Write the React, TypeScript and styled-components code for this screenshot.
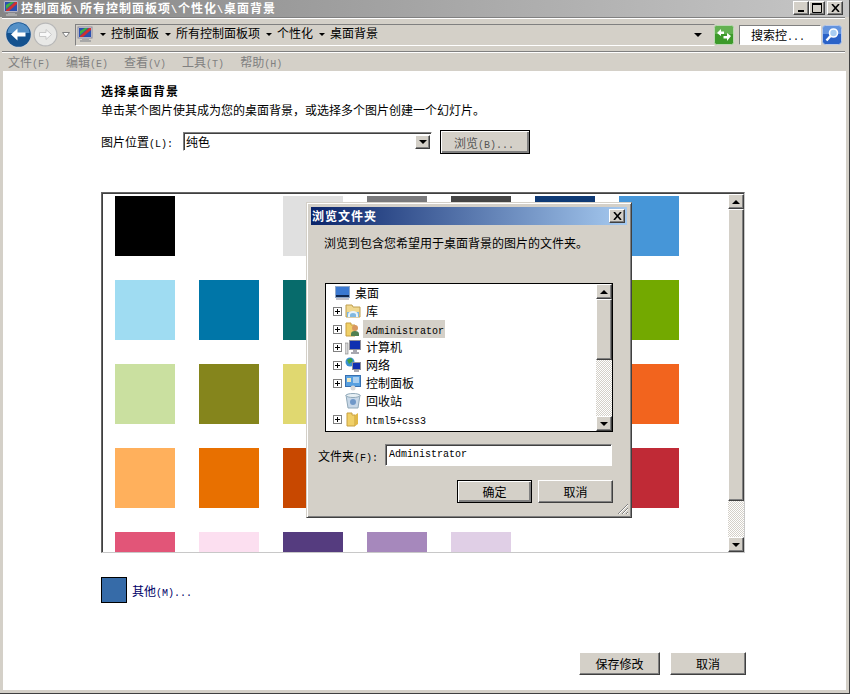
import styled, { createGlobalStyle } from "styled-components";

const GlobalStyle = createGlobalStyle`
  html, body {
    margin: 0;
    padding: 0;
    background: #d4d0c8;
  }
  * {
    box-sizing: border-box;
  }
  body {
    font-family: "Noto Sans CJK SC", "Liberation Sans", sans-serif;
    font-size: 12px;
    color: #000;
  }
`;

const raised = `
  background: #d4d0c8;
  border: 1px solid;
  border-color: #fff #404040 #404040 #fff;
  box-shadow: inset -1px -1px 0 #808080;
`;

const sunken = `
  border: 1px solid;
  border-color: #808080 #fff #fff #808080;
  box-shadow: inset 1px 1px 0 #404040;
`;

const Window = styled.div`
  position: relative;
  width: 850px;
  height: 694px;
  display: flex;
  flex-direction: column;
  overflow: hidden;
  background: #d4d0c8;
  border-right: 1px solid #404040;
  border-bottom: 1px solid #404040;
`;

const TitleBar = styled.div`
  height: 17px;
  flex: none;
  display: flex;
  align-items: center;
  padding: 0 6px 1px 3px;
  background: linear-gradient(90deg, #858585, #c6c6c6);
`;

const TitleText = styled.div`
  margin-left: 1px;
  font-weight: 700;
  letter-spacing: 1px;
  line-height: 16px;
  color: #fff;
  white-space: nowrap;
`;

const CaptionButtons = styled.div`
  margin-left: auto;
  display: flex;
  align-items: center;
`;

const CaptionButton = styled.div<{ $gap?: number }>`
  ${raised}
  width: 16px;
  height: 14px;
  margin-left: ${(p) => p.$gap ?? 0}px;
  display: flex;
  align-items: center;
  justify-content: center;
`;

const NavBar = styled.div`
  height: 35px;
  flex: none;
  display: flex;
  align-items: center;
  margin: 0 4px 0 2px;
  padding: 0 2px 0 3px;
  border-top: 1px solid #808080;
  border-bottom: 1px solid #808080;
  box-shadow: inset 0 1px 0 #fff, 0 1px 0 #fff;
`;

const NavGroup = styled.div`
  width: 70px;
  flex: none;
  display: flex;
  align-items: center;
`;

const ForwardSvg = styled.svg`
  margin-left: 1px;
`;

const DropSvg = styled.svg`
  margin-left: 4px;
`;

const RefreshSvg = styled.svg`
  margin-left: -1px;
`;

const SearchSvg = styled.svg`
  margin-left: 1px;
`;

const AddressBar = styled.div`
  width: 640px;
  height: 22px;
  flex: none;
  display: flex;
  align-items: center;
  padding: 0 12px 0 1px;
  border: 1px solid;
  border-color: #808080 #d4d0c8 #fff #808080;
`;

const CrumbList = styled.div`
  margin-left: 6px;
  display: flex;
  align-items: center;
  gap: 6px;
`;

const Crumb = styled.span`
  display: flex;
  align-items: center;
  gap: 5px;
  padding-bottom: 3px;
  line-height: 16px;
  white-space: nowrap;
`;

const CrumbArrow = styled.span`
  width: 0;
  height: 0;
  flex: none;
  margin-top: 3px;
  border-left: 3px solid transparent;
  border-right: 3px solid transparent;
  border-top: 3px solid #000;
`;

const AddressDrop = styled.span`
  margin-left: auto;
  width: 0;
  height: 0;
  border-left: 4px solid transparent;
  border-right: 4px solid transparent;
  border-top: 4px solid #000;
`;

const SearchInput = styled.div`
  ${sunken}
  width: 82px;
  height: 20px;
  margin-left: 5px;
  padding-left: 11px;
  background: #fff;
  line-height: 18px;
  white-space: nowrap;
  box-shadow: none;
`;

const MenuBar = styled.div`
  height: 19px;
  flex: none;
  display: flex;
  align-items: center;
  gap: 16px;
  padding: 1px 0 0 8px;
  color: #808080;
`;

const MenuItem = styled.span`
  white-space: nowrap;
  line-height: 16px;
`;

const Mono = styled.span`
  font-family: "Liberation Mono", monospace;
  font-size: 10px;
  line-height: 1;
`;

const Content = styled.main`
  flex: 1;
  min-height: 0;
  margin: 0 3px 3px 3px;
  padding: 11px 100px 15px 98px;
  display: flex;
  flex-direction: column;
  background: #fff;
`;

const Heading = styled.div`
  font-weight: 700;
  letter-spacing: 1px;
  line-height: 18px;
`;

const Intro = styled.div`
  line-height: 20px;
`;

const LocationRow = styled.div`
  margin-top: 9px;
  height: 25px;
  display: flex;
  align-items: center;
`;

const LocationLabel = styled.span`
  width: 82px;
  flex: none;
  white-space: nowrap;
`;

const SelectBox = styled.div`
  ${sunken}
  width: 249px;
  height: 19px;
  flex: none;
  display: flex;
  align-items: center;
  justify-content: space-between;
  padding: 0 1px 0 2px;
  background: #fff;
`;

const Button = styled.div<{ $primary?: boolean; $width: number; $height: number }>`
  ${raised}
  width: ${(p) => p.$width}px;
  height: ${(p) => p.$height}px;
  flex: none;
  display: flex;
  align-items: center;
  justify-content: center;
  white-space: nowrap;
  ${(p) =>
    p.$primary &&
    `outline: 1px solid #000; outline-offset: -1px;
     box-shadow: inset 1px 1px 0 #fff, inset -2px -2px 0 #808080;`}
`;

const BrowseButton = styled(Button)`
  margin-left: 8px;
  padding-right: 2px;
  align-self: flex-end;
  color: #555;
`;

const ScrollButton = styled.div<{ $size: number }>`
  ${raised}
  width: ${(p) => p.$size}px;
  height: ${(p) => p.$size - 1}px;
  flex: none;
  display: flex;
  align-items: center;
  justify-content: center;
`;

const ArrowGlyph = styled.span<{ $up?: boolean }>`
  width: 0;
  height: 0;
  border-left: 4px solid transparent;
  border-right: 4px solid transparent;
  ${(p) => (p.$up ? "border-bottom: 4px solid #000;" : "border-top: 4px solid #000;")}
`;

const Track = styled.div`
  flex: 1;
  background: repeating-conic-gradient(#d4d0c8 0 25%, #fff 0 50%) 0 0 / 2px 2px;
`;

const Thumb = styled.div<{ $height: number }>`
  ${raised}
  height: ${(p) => p.$height}px;
  flex: none;
`;

const ScrollBar = styled.div<{ $width: number }>`
  width: ${(p) => p.$width}px;
  flex: none;
  display: flex;
  flex-direction: column;
`;

const ColorBox = styled.div`
  margin-top: 38px;
  padding-top: 1px;
  width: 644px;
  height: 361px;
  flex: none;
  display: flex;
  overflow: hidden;
  border: 1px solid;
  border-color: #666 #c8c8c8 #c8c8c8 #666;
  box-shadow: inset 1px 1px 0 #404040;
`;

const SwatchGrid = styled.div`
  flex: 1;
  padding: 2px 0 0 13px;
  display: grid;
  grid-template-columns: repeat(7, 60px);
  grid-auto-rows: 60px;
  gap: 24px;
  overflow: hidden;
`;

const Swatch = styled.div<{ $color: string }>`
  background: ${(p) => p.$color};
`;

const OtherRow = styled.div`
  margin-top: 24px;
  display: flex;
  align-items: center;
  gap: 5px;
  color: #000066;
`;

const OtherSwatch = styled.div`
  width: 26px;
  height: 26px;
  background: #366ba8;
  border: 1px solid #000;
`;

const Footer = styled.div`
  margin-top: auto;
  display: flex;
  justify-content: flex-end;
  gap: 10px;
`;

const Dialog = styled.div`
  position: absolute;
  left: 306px;
  top: 202px;
  width: 326px;
  height: 316px;
  padding: 4px;
  display: flex;
  flex-direction: column;
  background: #d4d0c8;
  border: 1px solid;
  border-color: #d4d0c8 #404040 #404040 #d4d0c8;
  box-shadow: inset 1px 1px 0 #fff, inset -1px -1px 0 #808080;
`;

const DialogTitle = styled.div`
  height: 18px;
  flex: none;
  display: flex;
  align-items: center;
  justify-content: space-between;
  padding: 0 2px 1px 1px;
  background: linear-gradient(90deg, #0a246a, #a6caf0);
  color: #fff;
  font-weight: 700;
  letter-spacing: 1px;
`;

const DialogMessage = styled.div`
  margin: 9px 0 0 13px;
  line-height: 18px;
  white-space: nowrap;
`;

const Tree = styled.div`
  margin: 31px 0 0 14px;
  width: 288px;
  height: 149px;
  flex: none;
  display: flex;
  background: #fff;
  border: 1px solid #000;
  box-shadow: inset -1px -1px 0 #fff;
`;

const TreeList = styled.div`
  flex: 1;
  overflow: hidden;
`;

const TreeRow = styled.div<{ $root?: boolean }>`
  height: 18px;
  display: flex;
  align-items: center;
  padding-left: ${(p) => (p.$root ? 9 : 7)}px;
`;

const Expander = styled.span<{ $hidden?: boolean }>`
  width: 9px;
  height: 9px;
  flex: none;
  margin-right: 3px;
  border: 1px solid ${(p) => (p.$hidden ? "transparent" : "#808080")};
  ${(p) =>
    !p.$hidden &&
    `background:
      linear-gradient(#000, #000) center / 5px 1px no-repeat,
      linear-gradient(#000, #000) center / 1px 5px no-repeat;`}
`;

const TreeLabel = styled.span<{ $selected?: boolean }>`
  height: 18px;
  margin-left: 2px;
  padding: 0 1px 0 3px;
  line-height: 18px;
  white-space: nowrap;
  background: ${(p) => (p.$selected ? "#d4d0c8" : "transparent")};
`;

const FolderRow = styled.div`
  margin: 12px 0 0 7px;
  display: flex;
  align-items: center;
`;

const FolderLabel = styled.span`
  width: 67px;
  flex: none;
  white-space: nowrap;
`;

const FolderInput = styled.div`
  ${sunken}
  width: 227px;
  height: 22px;
  padding: 0 0 1px 3px;
  display: flex;
  align-items: center;
  background: #fff;
`;

const DialogButtons = styled.div`
  margin: 14px 14px 0 0;
  display: flex;
  justify-content: flex-end;
  gap: 6px;
`;

const Grip = styled.svg`
  position: absolute;
  right: 2px;
  bottom: 2px;
`;

const swatches = [
  "#000000", "#ffffff", "#e0e0e0", "#7a7a7c", "#454545", "#0f3a75", "#4696d8",
  "#9fdcf2", "#0076a8", "#076b6b", "#2a8a5a", "#3b9a3a", "#54a020", "#73a900",
  "#cae0a0", "#85851c", "#e0d870", "#f0c820", "#f8a800", "#f08020", "#f2641e",
  "#ffb05c", "#e87000", "#c84800", "#c83020", "#b02020", "#902028", "#c02a36",
  "#e25578", "#fcdff0", "#553c7f", "#a688bc", "#e0cfe6",
];

const MonitorIcon = () => (
  <svg width="17" height="17" viewBox="0 0 17 17">
    <rect x="1" y="1" width="14" height="11" fill="#d8d8e8" stroke="#8a8a9a" />
    <rect x="2" y="2" width="12" height="9" fill="#2a50b0" />
    <path d="M3 10 L12 2 L14 2 L14 4 L6 11 L3 11Z" fill="#d03030" />
    <path d="M3 5 L8 2 L11 2 L3 9Z" fill="#40b040" />
    <path d="M5 13h7v1h2v2H3v-2h2z" fill="#a8a8a8" />
  </svg>
);

const BackIcon = () => (
  <svg width="27" height="27" viewBox="0 0 27 27">
    <circle cx="13.5" cy="13.5" r="13.5" fill="#cfd0d4" />
    <circle cx="13.5" cy="13.5" r="12.3" fill="#14528f" />
    <path d="M2.5 12a11 10 0 0 1 22 0Z" fill="#6aa5da" opacity="0.75" />
    <path d="M6 13.5 L12.5 7.5 V11.5 H20.5 V15.5 H12.5 V19.5Z" fill="#fff" />
  </svg>
);

const ForwardIcon = () => (
  <ForwardSvg width="25" height="25" viewBox="0 0 25 25">
    <circle cx="12.5" cy="12.5" r="12" fill="#b8b8b8" />
    <circle cx="12.5" cy="12.5" r="10.8" fill="#e8e8e6" />
    <path d="M18.5 12.5 L13 7.5 V10.5 H6.5 V14.5 H13 V17.5Z" fill="#f8f8f8" stroke="#c8c8c8" />
  </ForwardSvg>
);

const NavDrop = () => (
  <DropSvg width="8" height="6" viewBox="0 0 8 6">
    <path d="M0.5 0.5 L4 5 L7.5 0.5Z" fill="#fff" stroke="#808080" />
  </DropSvg>
);

const RefreshIcon = () => (
  <RefreshSvg width="20" height="20" viewBox="0 0 20 20">
    <rect x="0.5" y="0.5" width="19" height="19" rx="2" fill="#3d9a2a" stroke="#b8d8b0" />
    <rect x="1" y="1" width="18" height="8" fill="#8ac878" opacity="0.5" />
    <path d="M3 8 L7 4 V6.5 H10 V9 H7 V11Z" fill="#fff" />
    <path d="M17 11 L13 16 V13.5 H9.5 V11 H13 V8Z" fill="#fff" />
  </RefreshSvg>
);

const SearchIcon = () => (
  <SearchSvg width="20" height="20" viewBox="0 0 20 20">
    <rect x="0.5" y="0.5" width="19" height="19" rx="3" fill="#2a62c8" stroke="#b8c8e8" />
    <rect x="1" y="1" width="18" height="8" fill="#8ab4ec" opacity="0.6" />
    <circle cx="11.5" cy="8" r="4" fill="#a8cdf2" stroke="#fff" strokeWidth="1.6" />
    <path d="M8.5 11 L4.5 15.5" stroke="#fff" strokeWidth="2.4" />
  </SearchSvg>
);

const MinimizeGlyph = () => (
  <svg width="8" height="8" viewBox="0 0 8 8">
    <rect x="1" y="6" width="6" height="2" fill="#000" />
  </svg>
);

const MaximizeGlyph = () => (
  <svg width="10" height="10" viewBox="0 0 10 10">
    <path d="M0.5 1.5H9.5V9.5H0.5Z" fill="none" stroke="#000" />
    <rect y="0" width="10" height="2" fill="#000" />
  </svg>
);

const CloseGlyph = () => (
  <svg width="9" height="8" viewBox="0 0 9 8">
    <path d="M1 0 L8 8 M8 0 L1 8" stroke="#000" strokeWidth="1.6" />
  </svg>
);

const DesktopIcon = () => (
  <svg width="15" height="14" viewBox="0 0 15 14">
    <rect x="0.5" y="0.5" width="14" height="11" fill="#3a78d0" stroke="#90a8c8" />
    <rect x="1" y="9" width="13" height="2" fill="#102850" />
    <rect x="1" y="12" width="13" height="2" fill="#c0c0c8" />
  </svg>
);

const LibraryIcon = () => (
  <svg width="16" height="16" viewBox="0 0 16 16">
    <path d="M1 4V2h6l1 2h7v10H1Z" fill="#f0d890" stroke="#c0a050" />
    <rect x="2" y="9" width="12" height="5" fill="#80b8e0" />
    <path d="M4 14v-2a4 3 0 0 1 8 0v2" fill="none" stroke="#e8f4fc" strokeWidth="2" />
  </svg>
);

const UserIcon = () => (
  <svg width="16" height="16" viewBox="0 0 16 16">
    <path d="M1 15V2h5v2h4v11Z" fill="#f0d068" stroke="#c8a040" />
    <circle cx="10" cy="7" r="3" fill="#d89860" />
    <path d="M6 15v-2a4 3 0 0 1 8 0v2Z" fill="#508050" />
  </svg>
);

const ComputerIcon = () => (
  <svg width="16" height="16" viewBox="0 0 16 16">
    <rect x="0" y="4" width="3" height="11" fill="#d8d8d8" stroke="#808080" strokeWidth="0.6" />
    <rect x="4.5" y="1.5" width="11" height="9" fill="#1030b0" stroke="#909098" />
    <path d="M8 11h4v2h2v2H6v-2h2Z" fill="#a8a8b0" />
  </svg>
);

const NetworkIcon = () => (
  <svg width="16" height="16" viewBox="0 0 16 16">
    <circle cx="5" cy="5" r="4.5" fill="#3890d0" />
    <path d="M2 3 L6 1 L8 4 L4 7Z" fill="#40a040" />
    <rect x="7.5" y="5.5" width="8" height="7" fill="#1030b0" stroke="#909098" />
    <path d="M9 13h5v2H9Z" fill="#a8a8b0" />
  </svg>
);

const PanelIcon = () => (
  <svg width="16" height="16" viewBox="0 0 16 16">
    <rect x="0.5" y="0.5" width="15" height="11" fill="#58a0e0" stroke="#3870b0" />
    <rect x="2" y="3" width="4" height="4" fill="#f0e8c0" />
    <path d="M8 3h6M8 5h6M8 7h6" stroke="#fff" />
    <circle cx="8" cy="13" r="2.5" fill="#d8d8d8" />
  </svg>
);

const BinIcon = () => (
  <svg width="16" height="16" viewBox="0 0 16 16">
    <path d="M1 2h14l-2 13H3Z" fill="#c8d8e8" stroke="#90a8b8" />
    <ellipse cx="8" cy="2.5" rx="7" ry="2" fill="#e8f0f4" stroke="#90a8b8" />
    <circle cx="8" cy="9" r="3" fill="#7098c8" />
  </svg>
);

const FolderIcon = () => (
  <svg width="16" height="16" viewBox="0 0 16 16">
    <path d="M2 15V2h5v2h3v11Z" fill="#f0d068" stroke="#c8a040" />
    <path d="M10 4l3-2v11l-3 2Z" fill="#e0b848" />
  </svg>
);

const ScrollArrows = ({ size, thumb }: { size: number; thumb: number }) => (
  <ScrollBar $width={size}>
    <ScrollButton $size={size}>
      <ArrowGlyph $up />
    </ScrollButton>
    <Thumb $height={thumb} />
    <Track />
    <ScrollButton $size={size}>
      <ArrowGlyph />
    </ScrollButton>
  </ScrollBar>
);

const treeRows = [
  { icon: <LibraryIcon />, label: "库" },
  { icon: <UserIcon />, label: <Mono>Administrator</Mono>, selected: true },
  { icon: <ComputerIcon />, label: "计算机" },
  { icon: <NetworkIcon />, label: "网络" },
  { icon: <PanelIcon />, label: "控制面板" },
  { icon: <BinIcon />, label: "回收站", noExpander: true },
  { icon: <FolderIcon />, label: <Mono>html5+css3</Mono> },
];

const menus = [
  ["文件", "(F)"],
  ["编辑", "(E)"],
  ["查看", "(V)"],
  ["工具", "(T)"],
  ["帮助", "(H)"],
];

const crumbs = ["控制面板", "所有控制面板项", "个性化", "桌面背景"];

const App = () => {
  return (
    <Window>
      <GlobalStyle />
      <TitleBar>
        <MonitorIcon />
        <TitleText>
          控制面板<Mono>\</Mono>所有控制面板项<Mono>\</Mono>个性化<Mono>\</Mono>桌面背景
        </TitleText>
        <CaptionButtons>
          <CaptionButton>
            <MinimizeGlyph />
          </CaptionButton>
          <CaptionButton>
            <MaximizeGlyph />
          </CaptionButton>
          <CaptionButton $gap={2}>
            <CloseGlyph />
          </CaptionButton>
        </CaptionButtons>
      </TitleBar>

      <NavBar>
        <NavGroup>
          <BackIcon />
          <ForwardIcon />
          <NavDrop />
        </NavGroup>
        <AddressBar>
          <MonitorIcon />
          <CrumbList>
            {crumbs.map((crumb) => (
              <Crumb key={crumb}>
                <CrumbArrow />
                {crumb}
              </Crumb>
            ))}
          </CrumbList>
          <AddressDrop />
        </AddressBar>
        <RefreshIcon />
        <SearchInput>
          搜索控<Mono>...</Mono>
        </SearchInput>
        <SearchIcon />
      </NavBar>

      <MenuBar>
        {menus.map(([name, key]) => (
          <MenuItem key={name}>
            {name}
            <Mono>{key}</Mono>
          </MenuItem>
        ))}
      </MenuBar>

      <Content>
        <Heading>选择桌面背景</Heading>
        <Intro>单击某个图片使其成为您的桌面背景，或选择多个图片创建一个幻灯片。</Intro>
        <LocationRow>
          <LocationLabel>
            图片位置<Mono>(L):</Mono>
          </LocationLabel>
          <SelectBox>
            纯色
            <ScrollButton $size={15}>
              <ArrowGlyph />
            </ScrollButton>
          </SelectBox>
          <BrowseButton $primary $width={90} $height={24}>
            <span>
              浏览<Mono>(B)...</Mono>
            </span>
          </BrowseButton>
        </LocationRow>

        <ColorBox>
          <SwatchGrid>
            {swatches.map((color, i) => (
              <Swatch key={`${color}_${i}`} $color={color} />
            ))}
          </SwatchGrid>
          <ScrollArrows size={16} thumb={292} />
        </ColorBox>

        <OtherRow>
          <OtherSwatch />
          <span>
            其他<Mono>(M)...</Mono>
          </span>
        </OtherRow>

        <Footer>
          <Button $width={81} $height={23}>
            保存修改
          </Button>
          <Button $width={76} $height={23}>
            取消
          </Button>
        </Footer>
      </Content>

      <Dialog>
        <DialogTitle>
          浏览文件夹
          <CaptionButton>
            <CloseGlyph />
          </CaptionButton>
        </DialogTitle>
        <DialogMessage>浏览到包含您希望用于桌面背景的图片的文件夹。</DialogMessage>
        <Tree>
          <TreeList>
            <TreeRow $root>
              <DesktopIcon />
              <TreeLabel>桌面</TreeLabel>
            </TreeRow>
            {treeRows.map((row, i) => (
              <TreeRow key={i}>
                <Expander $hidden={row.noExpander} />
                {row.icon}
                <TreeLabel $selected={row.selected}>{row.label}</TreeLabel>
              </TreeRow>
            ))}
          </TreeList>
          <ScrollArrows size={16} thumb={61} />
        </Tree>
        <FolderRow>
          <FolderLabel>
            文件夹<Mono>(F):</Mono>
          </FolderLabel>
          <FolderInput>
            <Mono>Administrator</Mono>
          </FolderInput>
        </FolderRow>
        <DialogButtons>
          <Button $primary $width={75} $height={23}>
            确定
          </Button>
          <Button $width={75} $height={23}>
            取消
          </Button>
        </DialogButtons>
        <Grip width="13" height="13" viewBox="0 0 13 13">
          <path d="M12 2 L2 12 M12 6 L6 12 M12 10 L10 12" stroke="#808080" strokeWidth="1" />
          <path d="M12 3 L3 12 M12 7 L7 12 M12 11 L11 12" stroke="#fff" strokeWidth="1" />
        </Grip>
      </Dialog>
    </Window>
  );
};

export default App;
